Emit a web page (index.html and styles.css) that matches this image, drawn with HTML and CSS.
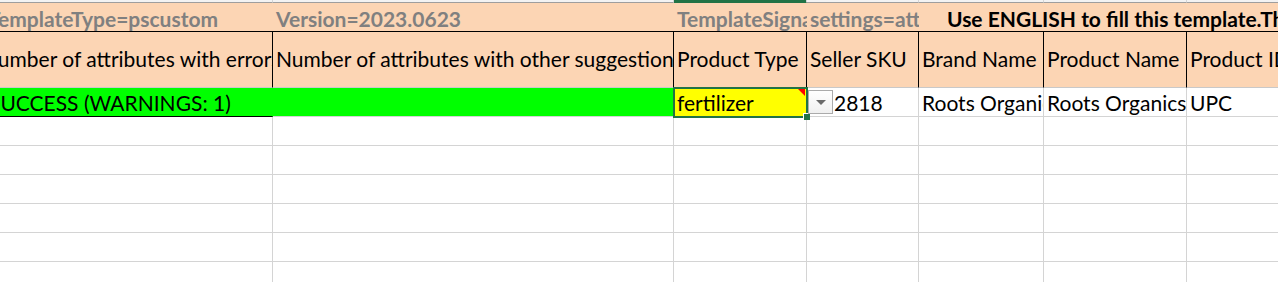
FILE: index.html
```html
<!DOCTYPE html>
<html>
<head>
<meta charset="utf-8">
<link rel="stylesheet" href="styles.css">
</head>
<body>
<div class="sheet">
  <div class="grid">
    <div class="row colhdr">
      <div class="ch"></div><div class="ch"></div><div class="ch sel"></div><div class="ch"></div><div class="ch"></div><div class="ch"></div><div class="ch last"></div>
    </div>
    <div class="row r1">
      <div class="c meta">TemplateType=pscustom</div>
      <div class="c meta">Version=2023.0623</div>
      <div class="c meta">TemplateSignature=Rk VSVElMSVpFUg==</div>
      <div class="c meta">settings=attributeRow=3&amp;contentLanguageTag=en_US</div>
      <div class="c note">Use ENGLISH to fill this template.The top 3 rows are for Amazon.com use only. Do not modify or delete the top 3 rows.</div>
    </div>
    <div class="row r2">
      <div class="c first">Number of attributes with errors</div>
      <div class="c">Number of attributes with other suggestions</div>
      <div class="c">Product Type</div>
      <div class="c">Seller SKU</div>
      <div class="c">Brand Name</div>
      <div class="c">Product Name</div>
      <div class="c last">Product ID Type</div>
    </div>
    <div class="row r3">
      <div class="c green first">SUCCESS (WARNINGS: 1)</div>
      <div class="c green"></div>
      <div class="c yellow active">fertilizer<span class="comment"></span><span class="handle"></span><span class="dropdown"><span class="tri"></span></span></div>
      <div class="c sku">2818</div>
      <div class="c">Roots Organics</div>
      <div class="c">Roots Organics</div>
      <div class="c last">UPC</div>
    </div>
    <div class="row rb"><div class="c"></div><div class="c"></div><div class="c"></div><div class="c"></div><div class="c"></div><div class="c"></div><div class="c last"></div></div>
    <div class="row rb"><div class="c"></div><div class="c"></div><div class="c"></div><div class="c"></div><div class="c"></div><div class="c"></div><div class="c last"></div></div>
    <div class="row rb"><div class="c"></div><div class="c"></div><div class="c"></div><div class="c"></div><div class="c"></div><div class="c"></div><div class="c last"></div></div>
    <div class="row rb"><div class="c"></div><div class="c"></div><div class="c"></div><div class="c"></div><div class="c"></div><div class="c"></div><div class="c last"></div></div>
    <div class="row rb"><div class="c"></div><div class="c"></div><div class="c"></div><div class="c"></div><div class="c"></div><div class="c"></div><div class="c last"></div></div>
    <div class="row rb"><div class="c"></div><div class="c"></div><div class="c"></div><div class="c"></div><div class="c"></div><div class="c"></div><div class="c last"></div></div>
  </div>
</div>
</body>
</html>
```

FILE: styles.css
```css
html, body {
  margin: 0;
  padding: 0;
  background: #ffffff;
}
.sheet {
  width: 1278px;
  height: 282px;
  overflow: hidden;
  font-family: Lato, "Liberation Sans", sans-serif;
  font-size: 21px;
  color: #000;
}
.grid {
  margin-left: -15px;
  width: 1400px;
}
.row {
  display: grid;
  grid-template-columns: 288px 401px 133px 112px 125px 143px 198px;
}
.c {
  box-sizing: border-box;
  overflow: hidden;
  white-space: nowrap;
  padding: 0 2px 0 3px;
  display: flex;
  align-items: center;
  position: relative;
}

/* column header strip */
.colhdr { height: 3px; }
.ch {
  box-sizing: border-box;
  height: 3px;
  background: #f3f3f3;
  border-right: 1px solid #d5d5d5;
  border-bottom: 1px solid #9e9e9e;
}
.ch.sel {
  background: #217346;
  border-bottom-color: #217346;
}

/* row 1 : template meta */
.r1 {
  height: 29px;
  background: #fcd5b4;
  border-bottom: 1px solid #000;
  box-sizing: border-box;
  grid-template-columns: 288px 401px 133px 112px 344px;
}
.r1 .c {
  font-weight: 700;
  color: #808080;
  padding-top: 2px;
}
.r1 .note {
  color: #000;
  padding-left: 28px;
  overflow: visible;
}

/* row 2 : headers */
.r2 {
  height: 56px;
}
.r2 .c {
  background: #fcd5b4;
  border-right: 1px solid #000;
  border-bottom: 1px solid #c9c9c9;
  padding-bottom: 2px;
}
.r2 .c.first { padding-left: 0; text-indent: -3px; }
.r2 .c.last { border-right: none; }

/* data rows */
.r3, .rb { height: 29px; }
.r3 .c, .rb .c {
  border-right: 1px solid #d4d4d4;
  border-bottom: 1px solid #d4d4d4;
}
.r3 .green {
  background: #00ff00;
  border-right-color: #00ff00;
}
.r3 .green.first {
  border-bottom-color: #000;
  padding-left: 4px;
}
.r3 .yellow {
  background: #ffff00;
  overflow: visible;
}
.active {
  outline: 2px solid #217346;
  outline-offset: -1px;
  z-index: 2;
}
.comment {
  position: absolute;
  top: 1px;
  right: 1px;
  width: 0;
  height: 0;
  border-top: 7px solid #ff0000;
  border-left: 7px solid transparent;
}
.handle {
  position: absolute;
  right: -4px;
  bottom: -4px;
  width: 6px;
  height: 6px;
  background: #217346;
  border: 1px solid #fff;
  border-right: none;
  border-bottom: none;
}
.dropdown {
  position: absolute;
  left: 134px;
  top: 2px;
  width: 25px;
  height: 24px;
  box-sizing: border-box;
  border: 1px solid #ababab;
  background: linear-gradient(#ffffff, #f0f0f0);
  display: flex;
  align-items: center;
  justify-content: center;
}
.tri {
  width: 0;
  height: 0;
  border-left: 5px solid transparent;
  border-right: 5px solid transparent;
  border-top: 5px solid #6a6a6a;
}
.sku { padding-left: 27px !important; }
.c.last { border-right: none !important; }
```
